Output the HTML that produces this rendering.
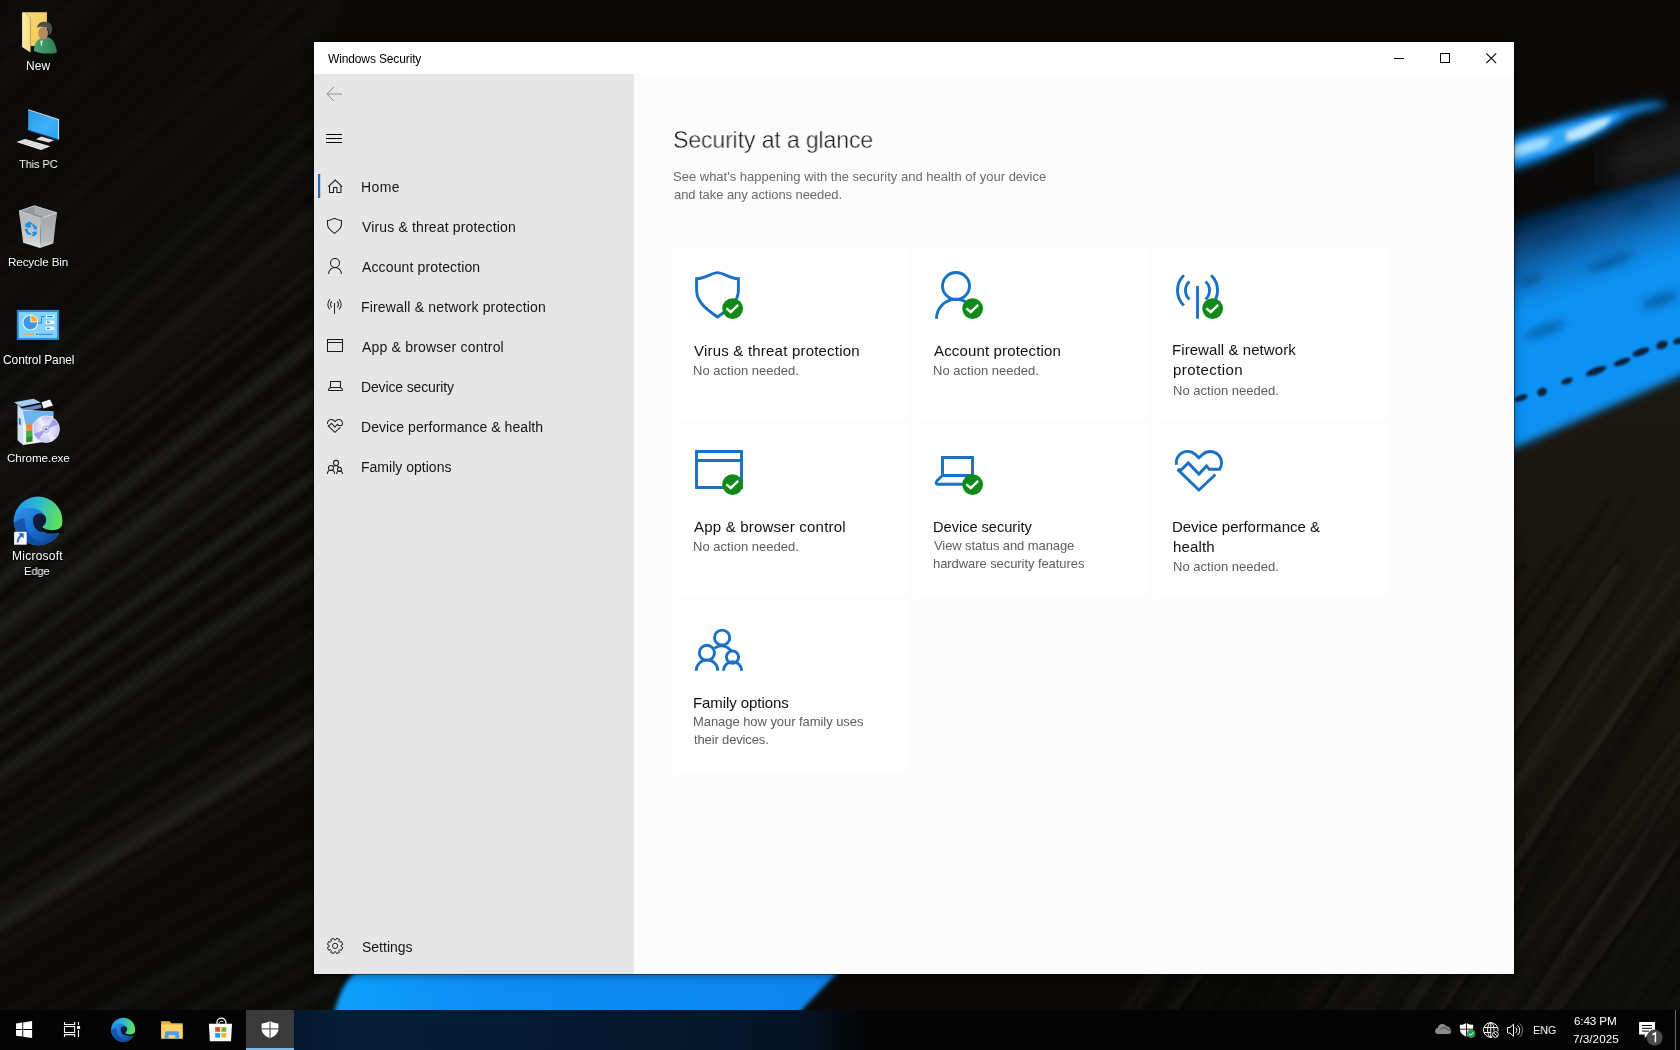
<!DOCTYPE html>
<html>
<head>
<meta charset="utf-8">
<title>Windows Security</title>
<style>
html,body{margin:0;padding:0;}
body{width:1680px;height:1050px;overflow:hidden;position:relative;background:#0b0a09;font-family:"Liberation Sans",sans-serif;}
.abs{position:absolute;}
.t{position:absolute;white-space:nowrap;line-height:1;will-change:transform;}
.sh{text-shadow:1px 1px 1px rgba(0,0,0,.95),0 0 2px rgba(0,0,0,.9);}
#wall{position:absolute;left:0;top:0;width:1680px;height:1050px;}
#win{position:absolute;left:314px;top:42px;width:1200px;height:932px;background:#fcfcfc;box-shadow:0 0 0 1px rgba(0,0,0,.42),0 1px 9px 1px rgba(0,0,0,.34);}
#titlebar{position:absolute;left:0;top:0;width:1200px;height:32px;background:#fff;}
#side{position:absolute;left:0;top:32px;width:320px;height:900px;background:#e6e6e6;}
.card{position:absolute;width:234px;height:170px;background:#fefefe;}
#task{position:absolute;left:0;top:1010px;width:1680px;height:40px;background:#040404;}
</style>
</head>
<body>

<svg id="wall" viewBox="0 0 1680 1050">
<defs>
<filter id="b2" x="-10%" y="-10%" width="120%" height="120%"><feGaussianBlur stdDeviation="2.200"/></filter>
<filter id="b3" x="-10%" y="-10%" width="120%" height="120%"><feGaussianBlur stdDeviation="3"/></filter>
<filter id="b20" x="-50%" y="-50%" width="200%" height="200%"><feGaussianBlur stdDeviation="22"/></filter>
<filter id="b12" x="-50%" y="-50%" width="200%" height="200%"><feGaussianBlur stdDeviation="12"/></filter>
<filter id="b4" x="-20%" y="-20%" width="140%" height="140%"><feGaussianBlur stdDeviation="4"/></filter>
<filter id="b7" x="-20%" y="-20%" width="140%" height="140%"><feGaussianBlur stdDeviation="7"/></filter>
<filter id="b1" x="-20%" y="-20%" width="140%" height="140%"><feGaussianBlur stdDeviation="1.300"/></filter>
<linearGradient id="gBig" gradientUnits="userSpaceOnUse" x1="1585" y1="192" x2="1619" y2="286">
<stop offset="0" stop-color="#04182c"/><stop offset="0.300" stop-color="#08477f"/><stop offset="0.620" stop-color="#0b73c4"/><stop offset="0.880" stop-color="#0d8eee"/><stop offset="1" stop-color="#0d92f4"/></linearGradient>
<linearGradient id="gTube" gradientUnits="userSpaceOnUse" x1="1530" y1="0" x2="1680" y2="0"><stop offset="0" stop-color="#202023" stop-opacity="0"/><stop offset="0.550" stop-color="#202023" stop-opacity="0.600"/><stop offset="1" stop-color="#26262a" stop-opacity="0.900"/></linearGradient>
<linearGradient id="gRB" gradientUnits="userSpaceOnUse" x1="0" y1="420" x2="0" y2="1010"><stop offset="0" stop-color="#1b1812"/><stop offset="0.450" stop-color="#18150f"/><stop offset="1" stop-color="#100f0b"/></linearGradient>
<linearGradient id="gRB2" gradientUnits="userSpaceOnUse" x1="1200" y1="0" x2="1514" y2="0"><stop offset="0" stop-color="#11100c" stop-opacity="0"/><stop offset="1" stop-color="#11100c" stop-opacity="1"/></linearGradient>
<linearGradient id="gBot" gradientUnits="userSpaceOnUse" x1="340" y1="0" x2="830" y2="0">
<stop offset="0" stop-color="#0aa0fb"/><stop offset="0.300" stop-color="#0a8df6"/><stop offset="1" stop-color="#0a86f0"/></linearGradient>
<linearGradient id="gTb" gradientUnits="userSpaceOnUse" x1="290" y1="0" x2="860" y2="0">
<stop offset="0" stop-color="#03111f" stop-opacity="0"/><stop offset="0.080" stop-color="#041a31"/><stop offset="0.800" stop-color="#04182d"/><stop offset="1" stop-color="#03101e" stop-opacity="0"/></linearGradient>
</defs>
<rect width="1680" height="1050" fill="#0b0a08"/>
<g filter="url(#b3)"><line x1="-20" y1="-21.5" x2="340" y2="-334.4" stroke="#eef0cc" stroke-opacity="0.016" stroke-width="5.7"/><line x1="-20" y1="-7.3" x2="340" y2="-320.2" stroke="#eef0cc" stroke-opacity="0.013" stroke-width="9.9"/><line x1="-20" y1="6.7" x2="340" y2="-306.2" stroke="#eef0cc" stroke-opacity="0.008" stroke-width="9.6"/><line x1="-20" y1="27.1" x2="340" y2="-285.8" stroke="#eef0cc" stroke-opacity="0.009" stroke-width="4.8"/><line x1="-20" y1="47.3" x2="340" y2="-265.6" stroke="#eef0cc" stroke-opacity="0.009" stroke-width="13.1"/><line x1="-20" y1="64.1" x2="340" y2="-248.8" stroke="#eef0cc" stroke-opacity="0.021" stroke-width="10.9"/><line x1="-20" y1="86.9" x2="340" y2="-226.0" stroke="#eef0cc" stroke-opacity="0.021" stroke-width="8.4"/><line x1="-20" y1="100.7" x2="340" y2="-212.2" stroke="#eef0cc" stroke-opacity="0.011" stroke-width="13.4"/><line x1="-20" y1="116.2" x2="340" y2="-196.8" stroke="#eef0cc" stroke-opacity="0.012" stroke-width="5.3"/><line x1="-20" y1="143.0" x2="340" y2="-169.9" stroke="#eef0cc" stroke-opacity="0.015" stroke-width="6.0"/><line x1="-20" y1="166.9" x2="340" y2="-146.0" stroke="#eef0cc" stroke-opacity="0.015" stroke-width="8.1"/><line x1="-20" y1="181.0" x2="340" y2="-132.0" stroke="#eef0cc" stroke-opacity="0.010" stroke-width="4.7"/><line x1="-20" y1="205.5" x2="340" y2="-107.4" stroke="#eef0cc" stroke-opacity="0.012" stroke-width="8.7"/><line x1="-20" y1="228.5" x2="340" y2="-84.5" stroke="#eef0cc" stroke-opacity="0.012" stroke-width="9.0"/><line x1="-20" y1="255.0" x2="340" y2="-58.0" stroke="#eef0cc" stroke-opacity="0.011" stroke-width="11.7"/><line x1="-20" y1="277.8" x2="340" y2="-35.2" stroke="#eef0cc" stroke-opacity="0.020" stroke-width="9.8"/><line x1="-20" y1="303.2" x2="340" y2="-9.8" stroke="#eef0cc" stroke-opacity="0.021" stroke-width="7.2"/><line x1="-20" y1="318.2" x2="340" y2="5.2" stroke="#eef0cc" stroke-opacity="0.018" stroke-width="8.6"/><line x1="-20" y1="333.7" x2="340" y2="20.8" stroke="#eef0cc" stroke-opacity="0.008" stroke-width="9.4"/><line x1="-20" y1="358.1" x2="340" y2="45.2" stroke="#eef0cc" stroke-opacity="0.015" stroke-width="12.4"/><line x1="-20" y1="386.0" x2="340" y2="74.2" stroke="#eef0cc" stroke-opacity="0.017" stroke-width="7.5"/><line x1="-20" y1="409.1" x2="340" y2="101.7" stroke="#eef0cc" stroke-opacity="0.033" stroke-width="10.4"/><line x1="-20" y1="436.4" x2="340" y2="134.1" stroke="#eef0cc" stroke-opacity="0.034" stroke-width="14.4"/><line x1="-20" y1="460.7" x2="340" y2="162.8" stroke="#eef0cc" stroke-opacity="0.041" stroke-width="4.7"/><line x1="-20" y1="484.7" x2="340" y2="191.2" stroke="#eef0cc" stroke-opacity="0.045" stroke-width="14.9"/><line x1="-20" y1="502.5" x2="340" y2="212.3" stroke="#eef0cc" stroke-opacity="0.040" stroke-width="8.2"/><line x1="-20" y1="515.9" x2="340" y2="228.0" stroke="#eef0cc" stroke-opacity="0.024" stroke-width="9.1"/><line x1="-20" y1="530.9" x2="340" y2="245.7" stroke="#eef0cc" stroke-opacity="0.072" stroke-width="4.6"/><line x1="-20" y1="546.1" x2="340" y2="263.6" stroke="#eef0cc" stroke-opacity="0.052" stroke-width="6.7"/><line x1="-20" y1="573.9" x2="340" y2="296.3" stroke="#eef0cc" stroke-opacity="0.055" stroke-width="4.9"/><line x1="-20" y1="596.2" x2="340" y2="322.5" stroke="#eef0cc" stroke-opacity="0.075" stroke-width="13.7"/><line x1="-20" y1="623.9" x2="340" y2="354.9" stroke="#eef0cc" stroke-opacity="0.053" stroke-width="7.1"/><line x1="-20" y1="643.0" x2="340" y2="377.2" stroke="#eef0cc" stroke-opacity="0.083" stroke-width="13.7"/><line x1="-20" y1="658.6" x2="340" y2="395.4" stroke="#eef0cc" stroke-opacity="0.043" stroke-width="5.9"/><line x1="-20" y1="675.6" x2="340" y2="415.2" stroke="#eef0cc" stroke-opacity="0.062" stroke-width="9.3"/><line x1="-20" y1="693.0" x2="340" y2="435.5" stroke="#eef0cc" stroke-opacity="0.053" stroke-width="4.0"/><line x1="-20" y1="712.3" x2="340" y2="458.0" stroke="#eef0cc" stroke-opacity="0.082" stroke-width="10.2"/><line x1="-20" y1="737.0" x2="340" y2="486.7" stroke="#eef0cc" stroke-opacity="0.064" stroke-width="9.7"/><line x1="-20" y1="761.5" x2="340" y2="515.2" stroke="#eef0cc" stroke-opacity="0.079" stroke-width="4.6"/><line x1="-20" y1="787.8" x2="340" y2="545.6" stroke="#eef0cc" stroke-opacity="0.074" stroke-width="13.6"/><line x1="-20" y1="807.5" x2="340" y2="568.4" stroke="#eef0cc" stroke-opacity="0.036" stroke-width="8.4"/><line x1="-20" y1="831.2" x2="340" y2="595.9" stroke="#eef0cc" stroke-opacity="0.034" stroke-width="4.7"/><line x1="-20" y1="847.8" x2="340" y2="615.0" stroke="#eef0cc" stroke-opacity="0.049" stroke-width="5.8"/><line x1="-20" y1="861.7" x2="340" y2="631.0" stroke="#eef0cc" stroke-opacity="0.038" stroke-width="4.0"/><line x1="-20" y1="876.4" x2="340" y2="648.0" stroke="#eef0cc" stroke-opacity="0.031" stroke-width="8.0"/><line x1="-20" y1="904.3" x2="340" y2="680.1" stroke="#eef0cc" stroke-opacity="0.038" stroke-width="10.8"/><line x1="-20" y1="921.6" x2="340" y2="700.0" stroke="#eef0cc" stroke-opacity="0.050" stroke-width="7.8"/><line x1="-20" y1="936.6" x2="340" y2="717.3" stroke="#eef0cc" stroke-opacity="0.085" stroke-width="13.3"/><line x1="-20" y1="957.6" x2="340" y2="741.4" stroke="#eef0cc" stroke-opacity="0.035" stroke-width="9.3"/><line x1="-20" y1="972.3" x2="340" y2="758.3" stroke="#eef0cc" stroke-opacity="0.020" stroke-width="7.8"/><line x1="-20" y1="999.4" x2="340" y2="789.3" stroke="#eef0cc" stroke-opacity="0.014" stroke-width="5.8"/><line x1="-20" y1="1028.6" x2="340" y2="822.7" stroke="#eef0cc" stroke-opacity="0.017" stroke-width="9.8"/><line x1="-20" y1="1050.8" x2="340" y2="848.2" stroke="#eef0cc" stroke-opacity="0.027" stroke-width="4.3"/><line x1="-20" y1="1080.4" x2="340" y2="882.0" stroke="#eef0cc" stroke-opacity="0.031" stroke-width="13.5"/><line x1="-20" y1="1097.9" x2="340" y2="901.9" stroke="#eef0cc" stroke-opacity="0.018" stroke-width="8.0"/><line x1="-20" y1="1124.0" x2="340" y2="931.7" stroke="#eef0cc" stroke-opacity="0.033" stroke-width="9.9"/><line x1="-20" y1="1142.6" x2="340" y2="951.2" stroke="#eef0cc" stroke-opacity="0.034" stroke-width="6.5"/><line x1="-20" y1="1172.3" x2="340" y2="980.9" stroke="#eef0cc" stroke-opacity="0.033" stroke-width="13.4"/><line x1="-20" y1="1199.3" x2="340" y2="1007.8" stroke="#eef0cc" stroke-opacity="0.019" stroke-width="12.1"/><line x1="-20" y1="1221.1" x2="340" y2="1029.6" stroke="#eef0cc" stroke-opacity="0.014" stroke-width="7.9"/><line x1="-20" y1="1234.5" x2="340" y2="1043.1" stroke="#eef0cc" stroke-opacity="0.020" stroke-width="7.1"/><line x1="-20" y1="1259.3" x2="340" y2="1067.9" stroke="#eef0cc" stroke-opacity="0.025" stroke-width="14.5"/><line x1="-20" y1="1288.2" x2="340" y2="1096.8" stroke="#eef0cc" stroke-opacity="0.037" stroke-width="14.9"/><line x1="-20" y1="1307.4" x2="340" y2="1116.0" stroke="#eef0cc" stroke-opacity="0.019" stroke-width="6.4"/></g>
<rect x="1514" y="380" width="176" height="594" fill="url(#gRB)"/><rect x="1150" y="974" width="540" height="40" fill="url(#gRB2)"/>
<g filter="url(#b2)"><line x1="1109.2" y1="1030" x2="1448.1" y2="580" stroke="#f0ecd4" stroke-opacity="0.027" stroke-width="6.5" stroke-linecap="round"/><line x1="1123.3" y1="1030" x2="1485.2" y2="494" stroke="#f0ecd4" stroke-opacity="0.035" stroke-width="5.3" stroke-linecap="round"/><line x1="1138.6" y1="1030" x2="1512.0" y2="509" stroke="#000" stroke-opacity="0.328" stroke-width="5.9" stroke-linecap="round"/><line x1="1156.3" y1="1030" x2="1509.5" y2="544" stroke="#f0ecd4" stroke-opacity="0.019" stroke-width="6.7" stroke-linecap="round"/><line x1="1164.7" y1="1030" x2="1472.8" y2="625" stroke="#000" stroke-opacity="0.335" stroke-width="6.0" stroke-linecap="round"/><line x1="1182.5" y1="1030" x2="1524.7" y2="536" stroke="#000" stroke-opacity="0.124" stroke-width="4.7" stroke-linecap="round"/><line x1="1200.1" y1="1030" x2="1523.3" y2="564" stroke="#000" stroke-opacity="0.347" stroke-width="6.7" stroke-linecap="round"/><line x1="1216.2" y1="1030" x2="1599.6" y2="520" stroke="#000" stroke-opacity="0.272" stroke-width="3.5" stroke-linecap="round"/><line x1="1226.1" y1="1030" x2="1609.1" y2="501" stroke="#000" stroke-opacity="0.239" stroke-width="6.6" stroke-linecap="round"/><line x1="1239.5" y1="1030" x2="1558.7" y2="547" stroke="#000" stroke-opacity="0.258" stroke-width="6.6" stroke-linecap="round"/><line x1="1252.3" y1="1030" x2="1625.7" y2="550" stroke="#000" stroke-opacity="0.328" stroke-width="2.9" stroke-linecap="round"/><line x1="1261.2" y1="1030" x2="1572.2" y2="596" stroke="#000" stroke-opacity="0.255" stroke-width="4.8" stroke-linecap="round"/><line x1="1274.3" y1="1030" x2="1634.9" y2="497" stroke="#000" stroke-opacity="0.192" stroke-width="4.8" stroke-linecap="round"/><line x1="1289.8" y1="1030" x2="1617.5" y2="570" stroke="#f0ecd4" stroke-opacity="0.026" stroke-width="5.8" stroke-linecap="round"/><line x1="1303.5" y1="1030" x2="1637.0" y2="562" stroke="#000" stroke-opacity="0.259" stroke-width="5.5" stroke-linecap="round"/><line x1="1315.8" y1="1030" x2="1603.5" y2="592" stroke="#f0ecd4" stroke-opacity="0.021" stroke-width="6.4" stroke-linecap="round"/><line x1="1328.9" y1="1030" x2="1601.7" y2="614" stroke="#000" stroke-opacity="0.235" stroke-width="2.7" stroke-linecap="round"/><line x1="1336.7" y1="1030" x2="1739.4" y2="492" stroke="#f0ecd4" stroke-opacity="0.037" stroke-width="5.3" stroke-linecap="round"/><line x1="1345.4" y1="1030" x2="1649.9" y2="586" stroke="#f0ecd4" stroke-opacity="0.039" stroke-width="2.7" stroke-linecap="round"/><line x1="1354.8" y1="1030" x2="1673.5" y2="544" stroke="#f0ecd4" stroke-opacity="0.036" stroke-width="4.4" stroke-linecap="round"/><line x1="1363.6" y1="1030" x2="1701.3" y2="562" stroke="#000" stroke-opacity="0.203" stroke-width="3.7" stroke-linecap="round"/><line x1="1378.5" y1="1030" x2="1737.7" y2="569" stroke="#000" stroke-opacity="0.206" stroke-width="4.2" stroke-linecap="round"/><line x1="1392.4" y1="1030" x2="1776.5" y2="490" stroke="#f0ecd4" stroke-opacity="0.039" stroke-width="6.9" stroke-linecap="round"/><line x1="1400.6" y1="1030" x2="1805.4" y2="486" stroke="#000" stroke-opacity="0.154" stroke-width="5.9" stroke-linecap="round"/><line x1="1412.2" y1="1030" x2="1688.9" y2="611" stroke="#000" stroke-opacity="0.359" stroke-width="3.3" stroke-linecap="round"/><line x1="1425.5" y1="1030" x2="1793.6" y2="494" stroke="#f0ecd4" stroke-opacity="0.026" stroke-width="2.3" stroke-linecap="round"/><line x1="1433.3" y1="1030" x2="1728.0" y2="582" stroke="#000" stroke-opacity="0.343" stroke-width="6.0" stroke-linecap="round"/><line x1="1441.0" y1="1030" x2="1759.2" y2="553" stroke="#000" stroke-opacity="0.361" stroke-width="3.7" stroke-linecap="round"/><line x1="1451.0" y1="1030" x2="1806.4" y2="564" stroke="#000" stroke-opacity="0.162" stroke-width="3.2" stroke-linecap="round"/><line x1="1458.5" y1="1030" x2="1835.2" y2="530" stroke="#f0ecd4" stroke-opacity="0.022" stroke-width="3.5" stroke-linecap="round"/><line x1="1471.0" y1="1030" x2="1845.1" y2="536" stroke="#000" stroke-opacity="0.124" stroke-width="2.1" stroke-linecap="round"/><line x1="1486.1" y1="1030" x2="1853.3" y2="510" stroke="#f0ecd4" stroke-opacity="0.018" stroke-width="4.4" stroke-linecap="round"/><line x1="1502.1" y1="1030" x2="1842.1" y2="559" stroke="#000" stroke-opacity="0.252" stroke-width="6.2" stroke-linecap="round"/><line x1="1516.7" y1="1030" x2="1839.3" y2="535" stroke="#f0ecd4" stroke-opacity="0.031" stroke-width="6.2" stroke-linecap="round"/><line x1="1528.1" y1="1030" x2="1925.2" y2="489" stroke="#000" stroke-opacity="0.313" stroke-width="2.6" stroke-linecap="round"/><line x1="1537.9" y1="1030" x2="1944.9" y2="494" stroke="#f0ecd4" stroke-opacity="0.032" stroke-width="6.2" stroke-linecap="round"/><line x1="1548.0" y1="1030" x2="1924.2" y2="527" stroke="#000" stroke-opacity="0.236" stroke-width="4.3" stroke-linecap="round"/><line x1="1557.9" y1="1030" x2="1815.9" y2="636" stroke="#000" stroke-opacity="0.371" stroke-width="4.7" stroke-linecap="round"/><line x1="1568.3" y1="1030" x2="1971.0" y2="480" stroke="#000" stroke-opacity="0.251" stroke-width="3.9" stroke-linecap="round"/><line x1="1577.5" y1="1030" x2="1968.9" y2="481" stroke="#000" stroke-opacity="0.224" stroke-width="3.3" stroke-linecap="round"/><line x1="1585.0" y1="1030" x2="1975.1" y2="529" stroke="#000" stroke-opacity="0.258" stroke-width="3.2" stroke-linecap="round"/><line x1="1600.2" y1="1030" x2="1901.9" y2="595" stroke="#000" stroke-opacity="0.205" stroke-width="6.4" stroke-linecap="round"/><line x1="1618.1" y1="1030" x2="1948.2" y2="596" stroke="#000" stroke-opacity="0.337" stroke-width="5.2" stroke-linecap="round"/><line x1="1634.9" y1="1030" x2="1936.2" y2="597" stroke="#000" stroke-opacity="0.256" stroke-width="6.1" stroke-linecap="round"/><line x1="1647.4" y1="1030" x2="1929.7" y2="609" stroke="#000" stroke-opacity="0.352" stroke-width="6.1" stroke-linecap="round"/><line x1="1661.9" y1="1030" x2="2015.1" y2="517" stroke="#000" stroke-opacity="0.214" stroke-width="2.2" stroke-linecap="round"/><line x1="1670.1" y1="1030" x2="1978.7" y2="569" stroke="#000" stroke-opacity="0.297" stroke-width="5.1" stroke-linecap="round"/><line x1="1682.5" y1="1030" x2="2012.3" y2="608" stroke="#000" stroke-opacity="0.259" stroke-width="5.7" stroke-linecap="round"/><line x1="1696.7" y1="1030" x2="2030.3" y2="598" stroke="#000" stroke-opacity="0.189" stroke-width="3.3" stroke-linecap="round"/><line x1="1711.8" y1="1030" x2="2036.7" y2="598" stroke="#000" stroke-opacity="0.219" stroke-width="6.9" stroke-linecap="round"/><line x1="1724.0" y1="1030" x2="2018.6" y2="603" stroke="#000" stroke-opacity="0.140" stroke-width="5.1" stroke-linecap="round"/></g>
<path d="M1610 146L1710 104V166L1610 188Z" fill="#29292d" opacity="0.520" filter="url(#b12)"/>
<g filter="url(#b4)">
<path d="M1505 222L1560 206L1620 190L1690 170V372L1505 452Z" fill="url(#gBig)"/>
</g>
<g filter="url(#b4)" opacity="0.550">
<ellipse cx="1560" cy="232" rx="28" ry="6" fill="#063d73" transform="rotate(-20 1560 232)"/>
<ellipse cx="1640" cy="205" rx="14" ry="9" fill="#063d73" transform="rotate(-20 1640 205)"/>
<ellipse cx="1530" cy="280" rx="12" ry="5" fill="#063d73" transform="rotate(-20 1530 280)"/>
<ellipse cx="1610" cy="262" rx="25" ry="5" fill="#063d73" transform="rotate(-20 1610 262)"/>
<ellipse cx="1660" cy="300" rx="20" ry="6" fill="#063d73" transform="rotate(-20 1660 300)"/>
<ellipse cx="1545" cy="330" rx="22" ry="5" fill="#063d73" transform="rotate(-20 1545 330)"/>
</g>
<g filter="url(#b1)"><ellipse cx="1521" cy="398" rx="7" ry="3" fill="#08213c" transform="rotate(-21 1521 398)"/><ellipse cx="1542" cy="392" rx="5" ry="4" fill="#08213c" transform="rotate(-21 1542 392)"/><ellipse cx="1567" cy="381" rx="6" ry="3" fill="#08213c" transform="rotate(-21 1567 381)"/><ellipse cx="1596" cy="371" rx="11" ry="3.5" fill="#08213c" transform="rotate(-21 1596 371)"/><ellipse cx="1622" cy="362" rx="9" ry="3" fill="#08213c" transform="rotate(-21 1622 362)"/><ellipse cx="1641" cy="352" rx="9" ry="3.5" fill="#08213c" transform="rotate(-21 1641 352)"/><ellipse cx="1662" cy="345" rx="6" ry="4" fill="#08213c" transform="rotate(-21 1662 345)"/><ellipse cx="1678" cy="341" rx="5" ry="3" fill="#08213c" transform="rotate(-21 1678 341)"/></g>
<g filter="url(#b4)"><path d="M1500 140L1540 129L1570 120L1600 112L1625 106.500L1645 102.500L1664 102L1664 107L1647 110.500L1632 115L1616 125L1600 134L1570 148L1540 161L1500 174Z" fill="#0d88ea"/></g>
<g filter="url(#b2)"><path d="M1500 146L1545 133L1585 121L1612 114L1622 114L1608 124L1585 137L1550 152L1500 166Z" fill="#2ea6f6"/><path d="M1566 133L1594 121L1611 117L1606 126L1584 138L1568 141Z" fill="#b9e8ff"/><path d="M1504 149L1538 139L1552 138L1544 148L1504 160Z" fill="#9adcff"/></g>
<g filter="url(#b2)"><path d="M333 1016L338 1000Q346 976 364 966L850 966L836 974L796 1016Z" fill="url(#gBot)"/></g>
</svg>
<svg width="0" height="0" style="position:absolute">
<defs>
<linearGradient id="edRing" gradientUnits="userSpaceOnUse" x1="-22" y1="-10" x2="24" y2="2"><stop offset="0" stop-color="#2498e6"/><stop offset="0.400" stop-color="#2bb7d8"/><stop offset="0.750" stop-color="#4fd37e"/><stop offset="1" stop-color="#68e155"/></linearGradient>
<linearGradient id="edWave" gradientUnits="userSpaceOnUse" x1="-20" y1="-10" x2="12" y2="24"><stop offset="0" stop-color="#2a8fe8"/><stop offset="0.500" stop-color="#1b6fd4"/><stop offset="1" stop-color="#0d4796"/></linearGradient>
<g id="edge">
<circle cx="0" cy="0" r="24.300" fill="url(#edRing)"/>
<path d="M-24.200 -2.500C-22 -9.500 -14 -13.400 -6.500 -12.900C1 -12.400 7.500 -7.500 8 0C7.800 2.500 6.200 4.400 4.500 5.300C3.200 7 3.600 9.300 5.900 11C10 13 16 13.200 21 12.200A24.300 24.300 0 0 1 -24.200 -2.500Z" fill="url(#edWave)"/>
<path d="M-13.500 -3C-14.500 7 -8 18 3 21C9 22.500 16 20 21 12.200C17 21 8.500 24.800 -1 24.300C-13 23.500 -23.500 14.500 -24.200 2C-21.500 -0.500 -17.500 -2.500 -13.500 -3Z" fill="#0f4a9e" opacity="0.800"/>
<path d="M-5.200 -0.500C-5.200 -6.800 1.800 -9 6 -6C9.200 -3.200 8.600 2.300 4.800 5.200C3.200 7 3.600 9.300 5.900 11C0 11.800 -5.200 6.500 -5.200 -0.500Z" fill="#0b1a38"/>
<path d="M3.900 6.200C6.500 9 12.500 10 19 8.700C21 8.100 22.600 6.600 23.400 5L26 5V12.500L21 12.200C16 13.400 9.500 13.200 5.900 11C3.600 9.600 2.900 7.600 3.900 6.200Z" fill="#0a0a0a"/>
</g>
<g id="i-shield"><path d="M1.6 7.700C11 7.700 16.500 1.600 22.500 1.600C28.500 1.600 34 7.700 43.400 7.700V19.500C43.400 30 35 37.500 22.500 46C10 37.500 1.600 30 1.600 19.500Z"/></g>
<g id="i-person"><circle cx="21" cy="15" r="13.500"/><path d="M1.500 47.700A19.500 19.500 0 0 1 35.940 35.170"/></g>
<g id="i-personfull"><circle cx="21" cy="15" r="13.500"/><path d="M1.500 47.700A19.500 19.500 0 0 1 40.500 47.700"/></g>
<g id="i-fire"><path d="M22.5 15.100V47.700" stroke-linecap="butt"/><path d="M8.900 4.300A21 21 0 0 0 8.900 34.500M36.100 4.300A21 21 0 0 1 36.100 34.500M14.47 10.480A12 12 0 0 0 14.470 28.320M30.53 10.480A12 12 0 0 1 30.530 28.320"/></g>
<g id="i-app"><path d="M1.5 4.500H46.500V40.500H1.500ZM1.5 13.500H46.500"/></g>
<g id="i-laptop"><path d="M7.500 10.500H37.500V28.500H7.500Z"/><path d="M7.500 28.500L2.200 33.500Q-0.600 37.300 3.700 37.300H41.300Q45.600 37.300 42.800 33.500L37.500 28.500" stroke-linejoin="round"/></g>
<g id="i-heart"><path d="M1.500 17.700A11.300 11.300 0 0 1 12.650 4.400A11.300 11.300 0 0 1 20.300 7.400L23.900 10.800L27.700 7.400A11.300 11.300 0 0 1 35.250 4.500A11.300 11.300 0 0 1 46.550 15.800A11.300 11.300 0 0 1 44.500 22.300H34.300L31.500 18.900L23.900 27.100L13.300 15.900L6.500 22.600H2.800L23.900 43L40.400 27.500" stroke-linejoin="miter" stroke-miterlimit="2" stroke-linecap="butt"/></g>
<g id="i-family"><circle cx="27.100" cy="14.700" r="7.600"/><circle cx="11.900" cy="29.800" r="7.600"/><circle cx="37.500" cy="34.100" r="6.100"/><path d="M1.2 47.700A10.800 10.800 0 0 1 22.800 47.700M28.600 47.700A9 9 0 0 1 46.600 47.700M19.600 25.200A11.600 11.600 0 0 1 36.200 28.100" stroke-linecap="butt"/></g>
<g id="i-badge"><circle cx="37.600" cy="37.600" r="10.400" fill="#0f8a19" stroke="none"/><path d="M31.400 37.400L35.800 41L43.200 33.900" fill="none" stroke="#f4fff2" stroke-width="2.500" stroke-linecap="butt" stroke-linejoin="miter"/></g>
</defs>
</svg>

<svg class="abs" style="left:0;top:0" width="330" height="620" viewBox="0 0 330 620">
<defs>
<linearGradient id="fl1" x1="0" y1="0" x2="1" y2="0"><stop offset="0" stop-color="#fdeab0"/><stop offset="1" stop-color="#f6d983"/></linearGradient>
<linearGradient id="fl2" x1="0" y1="0" x2="1" y2="1"><stop offset="0" stop-color="#f9d976"/><stop offset="1" stop-color="#f2c650"/></linearGradient>
<linearGradient id="gr1" x1="0" y1="0" x2="1" y2="0"><stop offset="0" stop-color="#4aa673"/><stop offset="1" stop-color="#2e7f54"/></linearGradient>
<linearGradient id="scr" x1="0" y1="0" x2="1" y2="1"><stop offset="0" stop-color="#2798e6"/><stop offset="0.550" stop-color="#3fb0f8"/><stop offset="1" stop-color="#2a9dee"/></linearGradient>
<linearGradient id="binL" x1="0" y1="0" x2="0" y2="1"><stop offset="0" stop-color="#b4b7b9"/><stop offset="0.700" stop-color="#c6c9cb"/><stop offset="1" stop-color="#e4e6e7"/></linearGradient>
<linearGradient id="binR" x1="0" y1="0" x2="0" y2="1"><stop offset="0" stop-color="#a2a5a8"/><stop offset="0.750" stop-color="#b5b8ba"/><stop offset="1" stop-color="#d0d2d3"/></linearGradient>
<linearGradient id="edA" x1="0" y1="0" x2="1" y2="0.400"><stop offset="0" stop-color="#1f9de8"/><stop offset="0.450" stop-color="#2fc0cf"/><stop offset="1" stop-color="#63e05c"/></linearGradient>
<linearGradient id="edB" x1="0" y1="0" x2="1" y2="1"><stop offset="0" stop-color="#1b86e2"/><stop offset="1" stop-color="#0c4fa6"/></linearGradient>
<radialGradient id="cd" cx="0.5" cy="0.5" r="0.5"><stop offset="0" stop-color="#f2f0ff"/><stop offset="0.650" stop-color="#dcd9f7"/><stop offset="1" stop-color="#c2bff0"/></radialGradient>
<filter id="s1" x="-20%" y="-20%" width="140%" height="140%"><feGaussianBlur stdDeviation="0.450"/></filter>
</defs>
<!-- New (user folder) -->
<g filter="url(#s1)">
<path d="M25.100 12.200H46.900V46H30.500V17.900Z" fill="url(#fl2)"/>
<path d="M22.100 12.200H25.100L30.500 17.900V52.600L22.100 46.900Z" fill="url(#fl1)"/>
<path d="M33.900 50.500C34.300 44 36.500 40.500 40.800 38.300L48.500 37.300C53.500 39.500 56 45 56.900 52.400C52 54.400 38 54 33.900 50.500Z" fill="url(#gr1)"/>
<path d="M40.300 41L42.700 40.300L41.300 47.200Z" fill="#d8f1e4"/>
<ellipse cx="43.200" cy="33.300" rx="4.800" ry="6.300" fill="#b88a62"/>
<path d="M37.300 28C37 23.500 41 21.600 45 21.700C49.500 21.800 52.300 24.800 52.200 28.800C52.100 31.500 50.800 34.300 48.600 35.600C49 32 48.300 29.500 46.600 27.600C44 26.500 40 26 37.300 28Z" fill="#4d4d4d"/>
</g>
<!-- This PC -->
<g filter="url(#s1)">
<path d="M28.200 109.700L59 119.600V139.800L28.200 129.900Z" fill="url(#scr)"/>
<path d="M28.200 109.700L59 119.600" stroke="#d6eeff" stroke-width="0.900" fill="none"/>
<path d="M58.600 119.500V139.700" stroke="#c9e8ff" stroke-width="1" fill="none"/>
<path d="M28.200 130.200L59 140.100" stroke="#0e4f8c" stroke-width="1.100" fill="none"/>
<path d="M35.800 139.300L41.300 136.600L54.100 140.200L48.800 142.600Z" fill="#dedede"/>
<path d="M16.400 142.100L25.100 139L50.300 146.300L41.100 150.100Z" fill="#ececec"/>
<path d="M19.300 141.100L44.200 148.800M22.200 140L47.300 147.500M22 143.700L30.600 140.600M27.600 145.300L36.200 142.200M33.200 146.900L41.800 143.800M38.800 148.500L47.400 145.400" stroke="#bcbcbc" stroke-width="0.500" fill="none"/>
</g>
<!-- Recycle Bin -->
<g filter="url(#s1)">
<path d="M19 211.100L34.300 205.800L56.800 212.700L41.100 218.400Z" fill="#8a8d90"/><path d="M34.300 205.800L56.800 212.700L55.800 221L34.300 214Z" fill="#a9acae"/><path d="M19 211.100L34.300 205.800V214L20 219Z" fill="#96999c"/>
<path d="M19 211.100L41.100 218.400L40 248.100L23.200 242.800Z" fill="url(#binL)"/>
<path d="M41.100 218.400L56.800 212.700L53.300 243.500L40 248.100Z" fill="url(#binR)"/>
<path d="M19 211.100L34.300 205.800L56.800 212.700L41.100 218.400Z" fill="none" stroke="#d9dbdc" stroke-width="0.800"/>
<g fill="#1f8fe0">
<path d="M25.500 223.500L29.800 221.300L32.600 223.800L30.300 225L31.500 227L27.700 227.900L26.600 226.600L25 227.400Z"/>
<path d="M33.300 223.200L35.800 226.400L37.100 225.500L36.800 229.700L32.900 229.200L34.100 228.200L31.900 225.200Z" opacity="0.950"/>
<path d="M24.500 229L27.400 228.400L28.500 232.200L31.300 233.300L30.900 235.200L26.800 233.700Z"/>
<path d="M32 232L36.500 231.200L37 233.800L33.800 236.300L31.400 235.600L33.300 234Z"/>
</g>
</g>
<!-- Control Panel -->
<g filter="url(#s1)">
<rect x="16.800" y="309.900" width="42.200" height="30.100" fill="#2a86d4"/>
<rect x="18.700" y="312" width="38.400" height="26.100" fill="#83d2fb"/>
<circle cx="30.300" cy="322.600" r="7.400" fill="#3f97e2" stroke="#eaf7ff" stroke-width="1.100"/>
<path d="M30.800 314.800A7.400 7.400 0 0 1 37.900 321.900H30.800Z" fill="#f0aa3c" stroke="#fff8e8" stroke-width="0.900"/>
<path d="M37.900 323H41.500V316.600H45.500" stroke="#1f6fbf" stroke-width="0.800" fill="none"/>
<g fill="#f4fbff" stroke="none"><rect x="45.700" y="314.900" width="8.800" height="3.400" rx="0.800"/><rect x="45.700" y="320.600" width="8.800" height="3.400" rx="0.800"/><rect x="45.700" y="326.700" width="8.800" height="3.400" rx="0.800"/></g>
<g fill="#2a78c4"><rect x="47" y="315.900" width="6" height="1.300"/><rect x="47" y="321.600" width="2.600" height="1.300"/><rect x="47" y="327.700" width="2.600" height="1.300"/></g>
<path d="M22.800 334.300H34.300" stroke="#f0aa3c" stroke-width="1" fill="none"/><path d="M38 334.300H52.600" stroke="#2a86d4" stroke-width="1" fill="none"/>
<rect x="35.700" y="333" width="2.500" height="2.500" fill="#2a78c4" stroke="#eaf7ff" stroke-width="0.600"/>
</g>
<!-- Chrome.exe installer -->
<g filter="url(#s1)">
<path d="M14.100 402.300L33.500 398.800L41 402.500L21 406.800Z" fill="#a4cff3"/>
<path d="M41.500 402.200L50 399.600L53 405.500L43.500 408.500Z" fill="#f3f6fb"/>
<path d="M22 408.300L41 404.200L41.500 408L23 412Z" fill="#6583c2"/>
<path d="M17.500 404.500L23 409.800V444.900L17.500 440.300Z" fill="#cfe0f3"/>
<path d="M23 409.800L53.300 411.500V440.500L23 444.900Z" fill="#eef2fa"/>
<path d="M23 410.500L53.300 411.500V415.500L45 418.500C39 420.500 33 424.500 26 426L23.500 415Z" fill="#6db4ee"/>
<path d="M18.800 417.500L20.800 419.200V425.500L18.800 423.800Z" fill="#2a78c4"/>
<path d="M26.200 424.700L32.500 423.700V430L26.200 431Z" fill="#f08a2e"/>
<path d="M26.200 431L32.500 430V437L26.200 438Z" fill="#3cb03e"/>
<path d="M26.200 437.500L32.500 436.500V441.500L26.200 442.500Z" fill="#2a8a2c"/>
<circle cx="46.100" cy="429.200" r="13.300" fill="url(#cd)" stroke="#f7f6ff" stroke-width="0.700"/>
<path d="M46.100 429.200L54 419L58.400 424.300Z" fill="#9d96ea" opacity="0.900"/>
<path d="M46.100 429.200L38.200 439.400L33.800 434.100Z" fill="#9d96ea" opacity="0.900"/>
<path d="M46.100 429.200L36.500 420.800L41.500 416.700Z" fill="#efedff" opacity="0.900"/>
<path d="M46.100 429.200L55.700 437.600L50.700 441.700Z" fill="#efedff" opacity="0.900"/>
<circle cx="46.100" cy="429.200" r="3.200" fill="#e9e6fb" stroke="#8d88c8" stroke-width="0.700"/>
<circle cx="46.100" cy="429.200" r="1.300" fill="#6f6aa8"/>
</g>
<!-- Microsoft Edge -->
<g filter="url(#s1)">
<use href="#edge" transform="translate(38.100 520.900)"/>
<rect x="14.100" y="531.800" width="12.600" height="12.900" fill="#f4f6f8"/>
<path d="M22.300 534.600C19.500 536.500 17.600 539 17.700 542.600" stroke="#2e66c8" stroke-width="1.900" fill="none"/>
<path d="M18.300 533.300H23.600V538.600Z" fill="#2e66c8"/>
</g>
</svg>

<span class="t sh" style="left:26.1px;top:59.7px;font-size:12.0px;color:#fff;letter-spacing:0.1px;">New</span>
<span class="t sh" style="left:18.7px;top:158.0px;font-size:11.7px;color:#fff;letter-spacing:-0.15px;transform:scaleX(0.9525);transform-origin:0 50%;">This PC</span>
<span class="t sh" style="left:8.2px;top:256.0px;font-size:11.7px;color:#fff;letter-spacing:-0.14px;">Recycle Bin</span>
<span class="t sh" style="left:2.7px;top:354.0px;font-size:12.0px;color:#fff;letter-spacing:-0.1px;">Control Panel</span>
<span class="t sh" style="left:6.9px;top:452.0px;font-size:11.7px;color:#fff;letter-spacing:-0.089px;">Chrome.exe</span>
<span class="t sh" style="left:12.3px;top:549.9px;font-size:12.0px;color:#fff;letter-spacing:0.25px;">Microsoft</span>
<span class="t sh" style="left:24.44px;top:564.7px;font-size:11.7px;color:#fff;letter-spacing:-0.15px;transform:scaleX(0.9615);transform-origin:0 50%;">Edge</span>
<div id="win"><div id="titlebar"></div><div id="side"></div></div>
<div class="card" style="left:674px;top:250px"></div>
<div class="card" style="left:914px;top:250px"></div>
<div class="card" style="left:1154px;top:250px"></div>
<div class="card" style="left:674px;top:426px"></div>
<div class="card" style="left:914px;top:426px"></div>
<div class="card" style="left:1154px;top:426px"></div>
<div class="card" style="left:674px;top:602px"></div>
<svg class="abs" style="left:0;top:0" width="1680" height="1050" shape-rendering="crispEdges">
<rect x="1394" y="58" width="10" height="1" fill="#000"/>
<rect x="1440.5" y="53.500" width="9" height="9" fill="none" stroke="#000" stroke-width="1"/>
<rect x="326" y="134" width="16" height="1" fill="#000"/><rect x="326" y="138" width="16" height="1" fill="#000"/><rect x="326" y="142" width="16" height="1" fill="#000"/>
<rect x="318" y="174" width="2.200" height="24" fill="#1a6fc4" shape-rendering="auto"/>
</svg>
<svg class="abs" style="left:0;top:0" width="1680" height="1050">
<path d="M1486.300 53.300L1496.200 63.200M1496.200 53.300L1486.300 63.200" stroke="#000" stroke-width="1.050" fill="none"/>
<path d="M342 94H327M333.900 87L326.900 94L333.900 101" stroke="#8a8a8a" stroke-width="1" fill="none"/>
<path d="M328.300 186.700L335.200 180L342.100 186.700M329.500 185.600V192.500H333.500V187.500H336.900V192.500H340.900V185.600" stroke="#1c1c1c" stroke-width="1.050" fill="none"/>
</svg>
<svg class="abs" style="left:327px;top:218px" width="16" height="16" viewBox="0 0 48 48" overflow="visible"><g fill="none" stroke="#1c1c1c" stroke-width="3.1"><use href="#i-shield"/></g></svg>
<svg class="abs" style="left:327.9px;top:258px" width="16" height="16" viewBox="0 0 48 48" overflow="visible"><g fill="none" stroke="#1c1c1c" stroke-width="3.1"><use href="#i-personfull"/></g></svg>
<svg class="abs" style="left:327px;top:298px" width="16" height="16" viewBox="0 0 48 48" overflow="visible"><g fill="none" stroke="#1c1c1c" stroke-width="3.1"><use href="#i-fire"/></g></svg>
<svg class="abs" style="left:327px;top:338px" width="16" height="16" viewBox="0 0 48 48" overflow="visible"><g fill="none" stroke="#1c1c1c" stroke-width="3.1"><use href="#i-app"/></g></svg>
<svg class="abs" style="left:327.9px;top:378px" width="16" height="16" viewBox="0 0 48 48" overflow="visible"><g fill="none" stroke="#1c1c1c" stroke-width="3.1"><use href="#i-laptop"/></g></svg>
<svg class="abs" style="left:327px;top:418px" width="16" height="16" viewBox="0 0 48 48" overflow="visible"><g fill="none" stroke="#1c1c1c" stroke-width="3.1"><use href="#i-heart"/></g></svg>
<svg class="abs" style="left:327px;top:458px" width="16" height="16" viewBox="0 0 48 48" overflow="visible"><g fill="none" stroke="#1c1c1c" stroke-width="3.1"><use href="#i-family"/></g></svg>
<svg class="abs" style="left:0;top:0" width="1680" height="1050"><path d="M335.65 940.03L336.59 938.24L339.46 939.43L338.87 941.36L339.64 942.13L341.57 941.54L342.76 944.41L340.97 945.35L340.97 946.45L342.76 947.39L341.57 950.26L339.64 949.67L338.87 950.44L339.46 952.37L336.59 953.56L335.65 951.77L334.55 951.77L333.61 953.56L330.74 952.37L331.33 950.44L330.56 949.67L328.63 950.26L327.44 947.39L329.23 946.45L329.23 945.35L327.44 944.41L328.63 941.54L330.56 942.13L331.33 941.36L330.74 939.43L333.61 938.24L334.55 940.03Z" fill="none" stroke="#1c1c1c" stroke-width="1" stroke-linejoin="round"/><circle cx="335.1" cy="945.9" r="2.6" fill="none" stroke="#1c1c1c" stroke-width="1"/></svg>
<svg class="abs" style="left:695px;top:271px" width="48" height="48" viewBox="0 0 48 48" overflow="visible"><g fill="none" stroke="#1a70c2" stroke-width="2.9"><use href="#i-shield"/></g><use href="#i-badge"/></svg>
<svg class="abs" style="left:935px;top:271px" width="48" height="48" viewBox="0 0 48 48" overflow="visible"><g fill="none" stroke="#1a70c2" stroke-width="2.9"><use href="#i-person"/></g><use href="#i-badge"/></svg>
<svg class="abs" style="left:1175px;top:271px" width="48" height="48" viewBox="0 0 48 48" overflow="visible"><g fill="none" stroke="#1a70c2" stroke-width="2.9"><use href="#i-fire"/></g><use href="#i-badge"/></svg>
<svg class="abs" style="left:695px;top:447px" width="48" height="48" viewBox="0 0 48 48" overflow="visible"><g fill="none" stroke="#1a70c2" stroke-width="2.9"><use href="#i-app"/></g><use href="#i-badge"/></svg>
<svg class="abs" style="left:935px;top:447px" width="48" height="48" viewBox="0 0 48 48" overflow="visible"><g fill="none" stroke="#1a70c2" stroke-width="2.9"><use href="#i-laptop"/></g><use href="#i-badge"/></svg>
<svg class="abs" style="left:1175px;top:447px" width="48" height="48" viewBox="0 0 48 48" overflow="visible"><g fill="none" stroke="#1a70c2" stroke-width="2.9"><use href="#i-heart"/></g></svg>
<svg class="abs" style="left:695px;top:623px" width="48" height="48" viewBox="0 0 48 48" overflow="visible"><g fill="none" stroke="#1a70c2" stroke-width="2.9"><use href="#i-family"/></g></svg>
<span class="t" style="left:328.0px;top:52.9px;font-size:12.0px;color:#000;letter-spacing:-0.133px;">Windows Security</span>
<span class="t" style="left:361.4px;top:180.0px;font-size:14.0px;color:#141414;letter-spacing:0.4px;">Home</span>
<span class="t" style="left:362.0px;top:220.0px;font-size:14.0px;color:#141414;letter-spacing:0.158px;">Virus &amp; threat protection</span>
<span class="t" style="left:362.0px;top:260.0px;font-size:14.0px;color:#141414;letter-spacing:0.129px;">Account protection</span>
<span class="t" style="left:361.4px;top:300.0px;font-size:14.0px;color:#141414;letter-spacing:0.179px;">Firewall &amp; network protection</span>
<span class="t" style="left:362.0px;top:340.0px;font-size:14.0px;color:#141414;letter-spacing:0.2px;">App &amp; browser control</span>
<span class="t" style="left:361.4px;top:380.0px;font-size:14.0px;color:#141414;letter-spacing:-0.143px;">Device security</span>
<span class="t" style="left:361.4px;top:420.0px;font-size:14.0px;color:#141414;letter-spacing:0.058px;">Device performance &amp; health</span>
<span class="t" style="left:361.4px;top:460.0px;font-size:14.0px;color:#141414;letter-spacing:0.015px;">Family options</span>
<span class="t" style="left:361.8px;top:939.8px;font-size:14.0px;color:#141414;">Settings</span>
<span class="t" style="left:672.81px;top:128.8px;font-size:23.4px;color:#151515;letter-spacing:-0.15px;transform:scaleX(0.9881);transform-origin:0 50%;-webkit-text-stroke:0.45px #fcfcfc;">Security at a glance</span>
<span class="t" style="left:672.9px;top:169.5px;font-size:13.0px;color:#6a6a6a;">See what&#x27;s happening with the security and health of your device</span>
<span class="t" style="left:673.5px;top:187.6px;font-size:13.0px;color:#6a6a6a;letter-spacing:-0.063px;">and take any actions needed.</span>
<span class="t" style="left:693.8px;top:342.6px;font-size:15.0px;color:#101010;letter-spacing:0.208px;">Virus &amp; threat protection</span>
<span class="t" style="left:693.2px;top:363.6px;font-size:13.0px;color:#5e5e5e;letter-spacing:0.025px;">No action needed.</span>
<span class="t" style="left:933.8px;top:342.6px;font-size:15.0px;color:#101010;letter-spacing:0.153px;">Account protection</span>
<span class="t" style="left:933.2px;top:363.6px;font-size:13.0px;color:#5e5e5e;letter-spacing:0.025px;">No action needed.</span>
<span class="t" style="left:1172.4px;top:342.4px;font-size:15.0px;color:#101010;letter-spacing:0.071px;">Firewall &amp; network</span>
<span class="t" style="left:1172.9px;top:362.2px;font-size:15.0px;color:#101010;letter-spacing:0.411px;">protection</span>
<span class="t" style="left:1173.2px;top:383.6px;font-size:13.0px;color:#5e5e5e;letter-spacing:0.025px;">No action needed.</span>
<span class="t" style="left:694.0px;top:518.7px;font-size:15.0px;color:#101010;letter-spacing:0.2px;">App &amp; browser control</span>
<span class="t" style="left:693.2px;top:539.7px;font-size:13.0px;color:#5e5e5e;letter-spacing:0.025px;">No action needed.</span>
<span class="t" style="left:932.9px;top:519.7px;font-size:14.62px;color:#101010;letter-spacing:-0.021px;">Device security</span>
<span class="t" style="left:933.8px;top:539.2px;font-size:13.0px;color:#5e5e5e;letter-spacing:-0.086px;">View status and manage</span>
<span class="t" style="left:933.2px;top:557.2px;font-size:13.0px;color:#5e5e5e;letter-spacing:-0.072px;">hardware security features</span>
<span class="t" style="left:1172.4px;top:518.7px;font-size:15.0px;color:#101010;letter-spacing:-0.026px;">Device performance &amp;</span>
<span class="t" style="left:1172.9px;top:538.5px;font-size:15.0px;color:#101010;letter-spacing:0.14px;">health</span>
<span class="t" style="left:1173.2px;top:560.0px;font-size:13.0px;color:#5e5e5e;letter-spacing:0.025px;">No action needed.</span>
<span class="t" style="left:692.6px;top:694.6px;font-size:15.0px;color:#101010;letter-spacing:-0.077px;">Family options</span>
<span class="t" style="left:692.9px;top:715.3px;font-size:13.0px;color:#5e5e5e;letter-spacing:-0.058px;">Manage how your family uses</span>
<span class="t" style="left:694.0px;top:733.0px;font-size:13.0px;color:#5e5e5e;letter-spacing:-0.138px;">their devices.</span>
<div id="task"></div>
<svg class="abs" style="left:0;top:1010px" width="1680" height="40" viewBox="0 1010 1680 40">
<defs>
<linearGradient id="tbBlue" gradientUnits="userSpaceOnUse" x1="294" y1="0" x2="870" y2="0"><stop offset="0" stop-color="#04192f"/><stop offset="0.100" stop-color="#051d36"/><stop offset="0.700" stop-color="#04182d"/><stop offset="0.880" stop-color="#041324"/><stop offset="1" stop-color="#040404"/></linearGradient>
<linearGradient id="edA2" x1="0" y1="0" x2="1" y2="0.400"><stop offset="0" stop-color="#1f9de8"/><stop offset="0.450" stop-color="#2fc0cf"/><stop offset="1" stop-color="#63e05c"/></linearGradient>
<linearGradient id="edB2" x1="0" y1="0" x2="1" y2="1"><stop offset="0" stop-color="#1b86e2"/><stop offset="1" stop-color="#0c4fa6"/></linearGradient>
<filter id="s2" x="-20%" y="-20%" width="140%" height="140%"><feGaussianBlur stdDeviation="0.350"/></filter>
</defs>
<rect x="294" y="1010" width="576" height="40" fill="url(#tbBlue)"/>
<!-- active app button -->
<rect x="246" y="1010" width="48" height="40" fill="#3a3a3a"/>
<rect x="246" y="1048" width="48" height="2" fill="#76b9ed"/>
<!-- start -->
<g fill="#fff">
<path d="M16 1023.400L22.300 1022.500V1029.100H16Z"/><path d="M23.200 1022.400L32.100 1021.100V1029.100H23.200Z"/>
<path d="M16 1030H22.300V1036.600L16 1035.700Z"/><path d="M23.200 1030H32.100V1038L23.200 1036.700Z"/>
</g>
<!-- task view -->
<g fill="none" stroke="#fff" stroke-width="1.100">
<rect x="64.500" y="1026.500" width="10.100" height="6"/>
<path d="M64.500 1022V1024.500H74.600V1022M64.500 1037V1034.600H74.600V1037"/>
<path d="M78.500 1022V1025M78.500 1030V1037"/>
</g>
<rect x="77" y="1026" width="3.100" height="2.900" fill="#fff"/>
<!-- edge -->
<g filter="url(#s2)"><use href="#edge" transform="translate(123.200 1029.800) scale(0.494)"/></g>
<!-- file explorer -->
<g filter="url(#s2)">
<path d="M161.200 1021.300H169.500L171.300 1023.200H182.600V1038.600H161.200Z" fill="#e9b33c"/>
<path d="M161.200 1024.600H182.600V1038.600H161.200Z" fill="#f9d266"/>
<path d="M164.700 1038.800V1033.600Q164.700 1031.200 167.100 1031.200H176.700Q179.100 1031.200 179.100 1033.600V1038.800H175.300V1035H168.500V1038.800Z" fill="#4a9fe2"/>
</g>
<!-- store -->
<g filter="url(#s2)">
<path d="M216.900 1024V1022.700A4.500 4.500 0 0 1 225.900 1022.700V1024" fill="none" stroke="#fff" stroke-width="1.200"/>
<path d="M218.900 1023.800A2.600 2.600 0 0 1 223.300 1021.900" fill="none" stroke="#fff" stroke-width="0.900"/>
<path d="M208.900 1023.800H232L231 1041.200H209.900Z" fill="#fdfdfd"/>
<rect x="215.200" y="1027.100" width="4.900" height="4.700" fill="#e0502c"/><rect x="221.400" y="1027.100" width="4.900" height="4.700" fill="#7eb52c"/>
<rect x="215.200" y="1033.100" width="4.900" height="4.600" fill="#1f9ae0"/><rect x="221.400" y="1033.100" width="4.900" height="4.600" fill="#f6b820"/>
</g>
<!-- security shield (active) -->
<path d="M270 1021.100C272.800 1022.900 275.500 1023.400 278.400 1023.500V1028.600C278.400 1033.300 275.200 1036.200 270 1038.200C264.800 1036.200 261.600 1033.300 261.600 1028.600V1023.500C264.500 1023.400 267.200 1022.900 270 1021.100Z" fill="#fff"/>
<path d="M270 1021V1038.300M261.500 1028.900H278.500" stroke="#3a3a3a" stroke-width="1" fill="none"/>
<!-- tray: onedrive -->
<path d="M1438.300 1034C1436.300 1034 1435 1032.700 1435 1031C1435 1029.400 1436.200 1028.200 1437.800 1028C1438 1025.800 1439.800 1024 1442.200 1024C1444 1024 1445.400 1024.900 1446.100 1026.300C1448.400 1026.100 1450.300 1027.600 1450.500 1029.700C1451 1030.200 1451.200 1030.900 1451.200 1031.600C1451.200 1033 1450.100 1034 1448.700 1034Z" fill="#8c8c8c"/>
<path d="M1440 1029.500C1441.200 1027.600 1443.800 1027 1445.700 1028.200L1450.500 1031" stroke="#040404" stroke-width="0.800" fill="none" opacity="0.700"/>
<!-- tray: defender -->
<path d="M1466.500 1022.900C1468.700 1024.300 1470.800 1024.700 1473.100 1024.800V1028.800C1473.100 1032.500 1470.600 1035.100 1466.500 1036.800C1462.400 1035.100 1459.900 1032.500 1459.900 1028.800V1024.800C1462.200 1024.700 1464.300 1024.300 1466.500 1022.900Z" fill="#fff"/>
<path d="M1466.500 1022.800V1036.900M1459.800 1029.200H1473.200" stroke="#040404" stroke-width="0.900" fill="none"/>
<circle cx="1471.200" cy="1033.800" r="4.100" fill="#2d9c5c"/>
<path d="M1469.100 1033.900L1470.600 1035.300L1473.300 1032.300" stroke="#fff" stroke-width="1" fill="none"/>
<!-- tray: globe -->
<g fill="none" stroke="#fff" stroke-width="1">
<circle cx="1490.800" cy="1030" r="7.300"/>
<ellipse cx="1490.800" cy="1030" rx="3.200" ry="7.300"/>
<path d="M1484 1027.500H1497.600M1484 1032.500H1491M1490.800 1022.700V1037.300"/>
</g>
<circle cx="1495.400" cy="1034.500" r="3.900" fill="#040404"/>
<circle cx="1495.400" cy="1034.500" r="2.900" fill="none" stroke="#fff" stroke-width="1"/>
<path d="M1493.400 1032.500L1497.400 1036.500" stroke="#fff" stroke-width="1" fill="none"/>
<!-- tray: speaker -->
<g fill="none" stroke="#fff" stroke-width="1" stroke-linejoin="miter">
<path d="M1507.500 1027.500H1510L1513.500 1024.200V1036.300L1510 1033H1507.500Z"/>
<path d="M1515.600 1027.600A3.500 3.500 0 0 1 1515.600 1032.900"/>
<path d="M1517.500 1025.300A6.500 6.500 0 0 1 1517.500 1035.200"/>
<path d="M1519.600 1023.300A9.500 9.500 0 0 1 1519.600 1037.200" stroke="#7a7a7a"/>
</g>
<!-- notification -->
<path d="M1639.100 1022.100H1655V1034.500H1648.200L1644.700 1038V1034.500H1639.100Z" fill="#fff"/>
<path d="M1642 1025.500H1652M1642 1028.300H1652M1642 1031.100H1649" stroke="#040404" stroke-width="1" fill="none"/>
<circle cx="1654.600" cy="1037.600" r="8" fill="#4b4b4b"/>
<path d="M1652.300 1034.700L1655.400 1033V1042.300" stroke="#fff" stroke-width="1.500" fill="none"/>
<rect x="1675" y="1010" width="1" height="40" fill="#6a6a6a"/>
</svg>

<span class="t" style="left:1532.87px;top:1023.8px;font-size:11.7px;color:#fff;letter-spacing:-0.15px;transform:scaleX(0.9292);transform-origin:0 50%;">ENG</span>
<span class="t" style="left:1574.2px;top:1014.6px;font-size:11.7px;color:#fff;letter-spacing:-0.15px;transform:scaleX(0.9929);transform-origin:0 50%;">6:43 PM</span>
<span class="t" style="left:1572.7px;top:1032.5px;font-size:11.7px;color:#fff;letter-spacing:0.029px;">7/3/2025</span>
</body>
</html>
